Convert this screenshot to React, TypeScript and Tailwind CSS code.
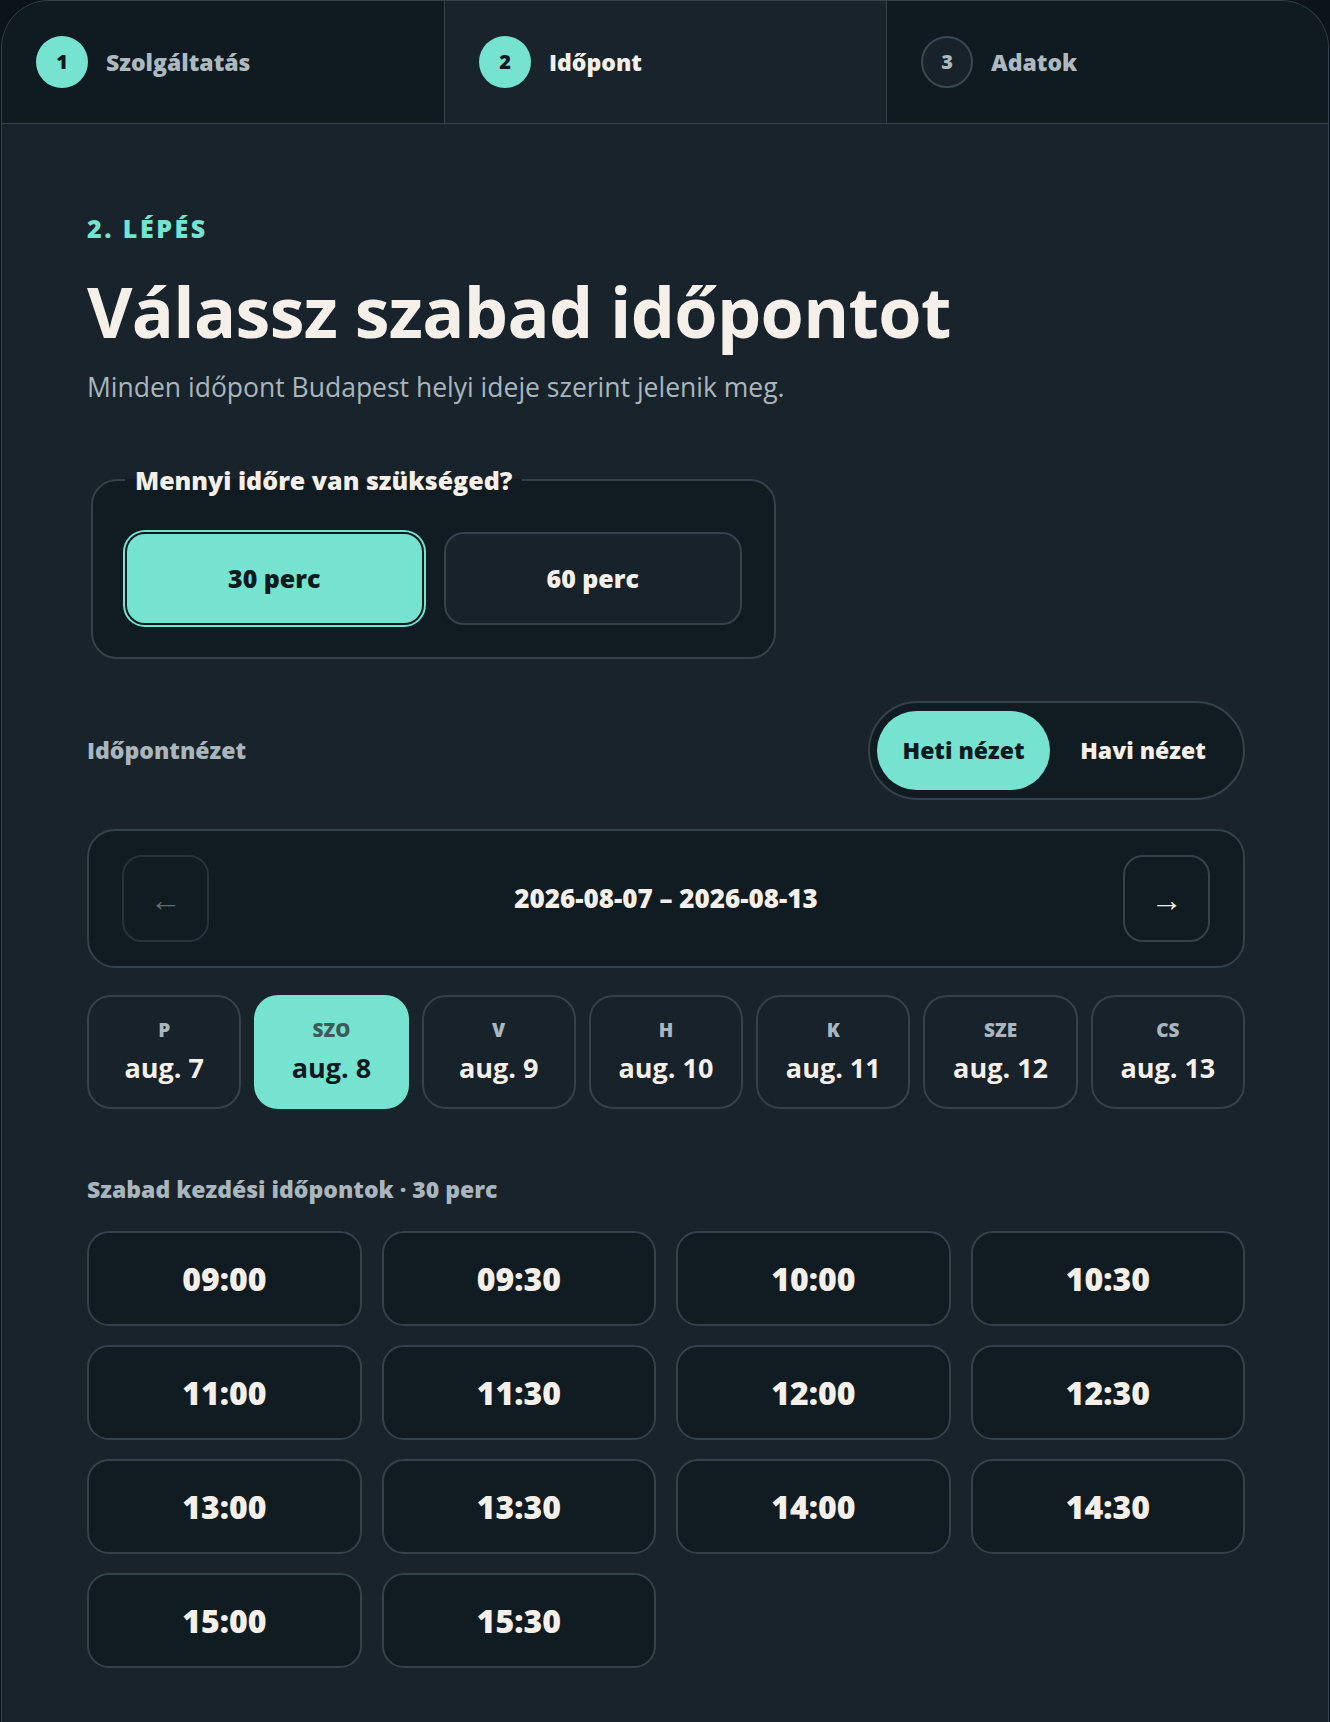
import { useState } from "react"

const steps = [
  { n: 1, label: "Szolgáltatás", state: "done" },
  { n: 2, label: "Időpont", state: "active" },
  { n: 3, label: "Adatok", state: "todo" },
]

const days = [
  { d: "P", date: "aug. 7" },
  { d: "SZO", date: "aug. 8" },
  { d: "V", date: "aug. 9" },
  { d: "H", date: "aug. 10" },
  { d: "K", date: "aug. 11" },
  { d: "SZE", date: "aug. 12" },
  { d: "CS", date: "aug. 13" },
]

const slots = [
  "09:00", "09:30", "10:00", "10:30",
  "11:00", "11:30", "12:00", "12:30",
  "13:00", "13:30", "14:00", "14:30",
  "15:00", "15:30",
]

export default function App() {
  const [duration, setDuration] = useState(30)
  const [view, setView] = useState("week")
  const [day, setDay] = useState(1)

  return (
    <div
      className="min-h-[1722px] bg-[#0d1419] text-[#f4efe8]"
      style={{ fontFamily: '"Open Sans", "Noto Sans", sans-serif' }}
    >
      <div className="mx-[1px] min-h-[1722px] overflow-hidden rounded-t-[48px] border border-b-0 border-[#34424c] bg-[#18232c]">
        {/* stepper */}
        <div className="grid h-[123px] grid-cols-3 border-b border-[#34424c]">
          {steps.map((s, i) => (
            <div
              key={s.n}
              className={
                "flex items-center gap-[18px] pl-[34px] " +
                (i > 0 ? "border-l border-[#34424c] " : "") +
                (s.state === "active" ? "bg-[#18232c]" : "bg-[#101a21]")
              }
            >
              <span
                className={
                  "flex h-[52px] w-[52px] items-center justify-center rounded-full text-[20px] font-extrabold " +
                  (s.state === "todo"
                    ? "border-2 border-[#3a4852] bg-[#17222a] text-[#aeb9bf]"
                    : "bg-[#76e3d0] text-[#0f1a20]")
                }
              >
                {s.n}
              </span>
              <span
                className={
                  "text-[23px] font-extrabold " +
                  (s.state === "active" ? "text-[#f4efe8]" : "text-[#aeb9bf]")
                }
              >
                {s.label}
              </span>
            </div>
          ))}
        </div>

        <div className="pb-[56px] pl-[85px] pr-[83px] pt-[89px]">
          <div className="text-[25px] font-extrabold leading-[30px] tracking-[0.1em] text-[#76e3d0]">
            2. LÉPÉS
          </div>
          <h1 className="mt-[28px] text-[70px] font-bold leading-[80px] tracking-[-0.01em] text-[#f4efe8]">
            Válassz szabad időpontot
          </h1>
          <p className="mt-[18px] text-[26.5px] leading-[36px] text-[#aab6bd]">
            Minden időpont Budapest helyi ideje szerint jelenik meg.
          </p>

          <fieldset className="ml-[4px] mt-[58px] w-[685px] rounded-[26px] border-2 border-[#34424c] bg-[#111b22] px-[32px] pb-[32px] pt-[35px]">
            <legend className="px-[10px] text-[25px] font-extrabold leading-[34px] text-[#f4efe8]">
              Mennyi időre van szükséged?
            </legend>
            <div className="grid grid-cols-2 gap-[20px]">
              {[30, 60].map((m) => (
                <button
                  key={m}
                  onClick={() => setDuration(m)}
                  className={
                    "h-[93px] rounded-[20px] text-[25px] font-extrabold " +
                    (duration === m
                      ? "border-2 border-[#0f1a20] bg-[#76e3d0] text-[#0f1a20] ring-2 ring-[#76e3d0]"
                      : "border-2 border-[#34424c] bg-[#17222b] text-[#f4efe8]")
                  }
                >
                  {m} perc
                </button>
              ))}
            </div>
          </fieldset>

          <div className="mt-[42px] flex items-center justify-between">
            <span className="text-[23px] font-extrabold text-[#aab6bd]">Időpontnézet</span>
            <div className="flex h-[99px] w-[377px] items-center rounded-full border-2 border-[#34424c] bg-[#111b22] px-[7px]">
              <button
                onClick={() => setView("week")}
                className={
                  "h-[79px] w-[173px] rounded-full text-[23px] font-extrabold " +
                  (view === "week" ? "bg-[#76e3d0] text-[#0f1a20]" : "text-[#f4efe8]")
                }
              >
                Heti nézet
              </button>
              <button
                onClick={() => setView("month")}
                className={
                  "h-[79px] flex-1 rounded-full text-[23px] font-extrabold " +
                  (view === "month" ? "bg-[#76e3d0] text-[#0f1a20]" : "text-[#f4efe8]")
                }
              >
                Havi nézet
              </button>
            </div>
          </div>

          <div className="mt-[29px] flex h-[139px] items-center justify-between rounded-[28px] border-2 border-[#34424c] bg-[#101b22] px-[33px]">
            <button
              disabled
              className="flex h-[87px] w-[87px] items-center justify-center rounded-[20px] border-2 border-[#26333c] text-[32px] text-[#5f6c74]"
            >
              ←
            </button>
            <span className="text-[26px] font-extrabold text-[#f4efe8]">2026-08-07 – 2026-08-13</span>
            <button className="flex h-[87px] w-[87px] items-center justify-center rounded-[20px] border-2 border-[#34424c] text-[32px] font-bold text-[#f4efe8]">
              →
            </button>
          </div>

          <div className="mt-[27px] grid grid-cols-7 gap-[13px]">
            {days.map((x, i) => (
              <button
                key={x.d}
                onClick={() => setDay(i)}
                className={
                  "flex h-[114px] flex-col items-center justify-center rounded-[24px] " +
                  (day === i
                    ? "bg-[#76e3d0] text-[#0f1a20]"
                    : "border-2 border-[#34424c] bg-[#17222b] text-[#f4efe8]")
                }
              >
                <span
                  className={
                    "text-[19px] font-extrabold leading-[24px] " +
                    (day === i ? "text-[#3c5a58]" : "text-[#aab6bd]")
                  }
                >
                  {x.d}
                </span>
                <span className="mt-[8px] text-[27px] font-bold leading-[36px]">{x.date}</span>
              </button>
            ))}
          </div>

          <div className="mt-[65px] text-[23px] font-extrabold leading-[30px] text-[#aab6bd]">
            Szabad kezdési időpontok · 30 perc
          </div>

          <div className="mt-[27px] grid grid-cols-4 gap-x-[20px] gap-y-[19px]">
            {slots.map((t) => (
              <button
                key={t}
                className="h-[95px] rounded-[22px] border-2 border-[#34424c] bg-[#101b22] text-[32px] font-extrabold text-[#f4efe8]"
              >
                {t}
              </button>
            ))}
          </div>
        </div>
      </div>
    </div>
  )
}
